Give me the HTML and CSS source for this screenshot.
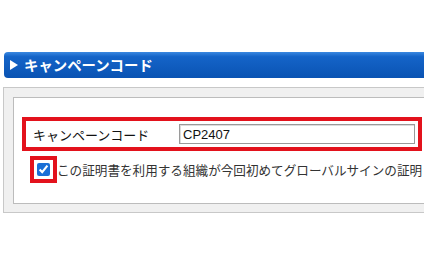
FILE: index.html
```html
<!DOCTYPE html>
<html lang="ja">
<head>
<meta charset="utf-8">
<title>キャンペーンコード</title>
<link rel="stylesheet" href="styles.css">
</head>
<body>
<div class="page">
  <div class="sec-head">
    <svg class="tri" width="8" height="10" viewBox="0 0 8 10"><polygon points="0,0 8,5 0,10" fill="#fff"/></svg>
    <span class="sec-title">キャンペーンコード</span>
  </div>
  <div class="panel">
    <div class="inner">
      <div class="code-row">
        <label class="code-label" for="code">キャンペーンコード</label>
        <input class="code-input" id="code" type="text" value="CP2407">
      </div>
      <div class="agree-row">
        <span class="cb-frame"><input class="cb" type="checkbox" checked></span>
        <span class="agree-text">この証明書を利用する組織が今回初めてグローバルサインの証明</span>
      </div>
    </div>
  </div>
</div>
</body>
</html>
```
FILE: styles.css
```css
html, body {
  margin: 0;
  background: #fff;
  overflow: hidden;
}
body {
  font-family: "Noto Sans CJK JP", "Noto Sans", sans-serif;
  color: #222;
}
.page {
  width: 470px;
  padding-top: 52px;
}
.sec-head {
  margin-left: 4px;
  height: 26px;
  display: flex;
  align-items: center;
  background: linear-gradient(to bottom, #3a88e0 0%, #1464c8 18%, #0a53b3 100%);
  border-radius: 4px 0 0 4px;
  color: #fff;
  font-weight: bold;
  font-size: 14.4px;
}
.tri {
  margin-left: 6px;
  margin-right: 6px;
  flex: none;
}
.sec-title {
  line-height: 26px;
}
.panel {
  margin: 9px 0 0 3px;
  border: 1px solid #c8c8c8;
  border-right: 0;
  background: #f0f0f0;
  padding: 9px 0 8px 9px;
}
.inner {
  border: 1px solid #bcbcbc;
  border-right: 0;
  background: #fff;
  padding: 19px 0 20px 8px;
}
.code-row {
  box-sizing: border-box;
  width: 400px;
  height: 34px;
  border: 4px solid #e3121c;
  padding-left: 7px;
  display: flex;
  align-items: center;
}
.code-label {
  width: 146px;
  flex: none;
  font-size: 13px;
  color: #111;
}
.code-input {
  box-sizing: border-box;
  width: 236px;
  height: 20px;
  margin: 0;
  padding: 0 0 0 3px;
  border: 1px solid #9a9a9a;
  box-shadow: inset 1px 1px 0 #dcdcdc;
  font-family: "Liberation Sans", Arial, sans-serif;
  font-size: 13px;
  color: #111;
  background: #fff;
}
.agree-row {
  margin-top: 5px;
  margin-left: 8px;
  display: flex;
  align-items: center;
  white-space: nowrap;
}
.cb-frame {
  display: flex;
  border: 4px solid #e3121c;
  flex: none;
}
.cb {
  margin: 3px;
  width: 13px;
  height: 13px;
  accent-color: #1a6fd6;
}
.agree-text {
  font-size: 12.6px;
  color: #333;
}
```
